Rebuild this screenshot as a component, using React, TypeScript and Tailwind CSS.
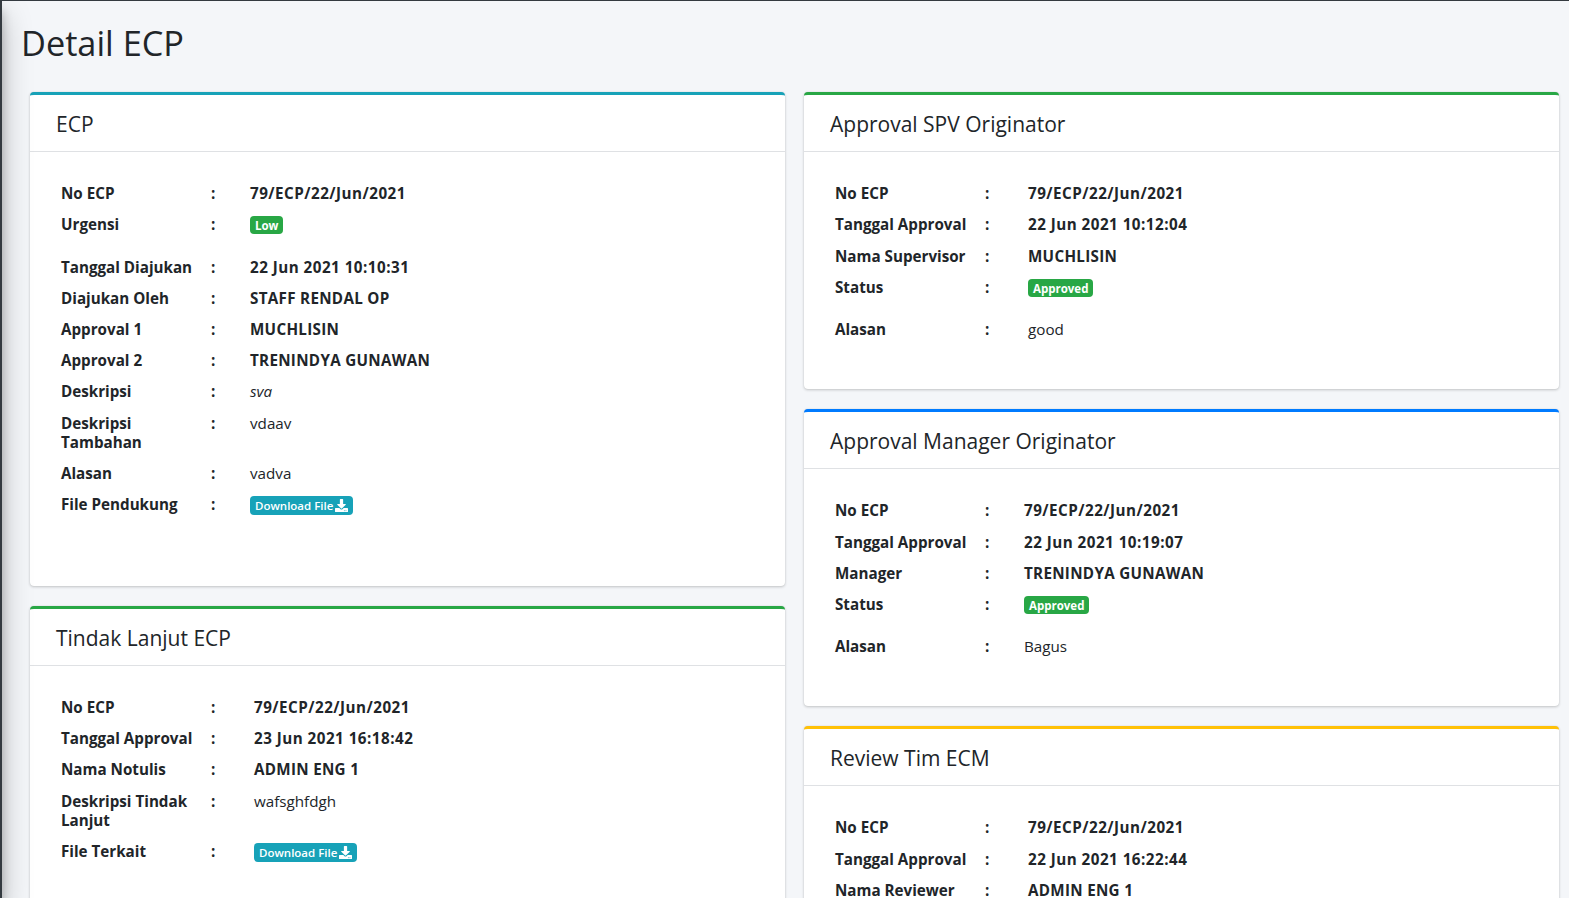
import { FaDownload } from "react-icons/fa";

type RowData = {
  label: string;
  value: React.ReactNode;
  tall?: boolean;
};

const Badge = ({ text }: { text: string }) => (
  <span className="inline-block align-top mt-[1px] px-[5px] h-[18px] leading-[19px] rounded-[4px] bg-[#28a745] text-white text-[11.5px] font-bold">
    {text}
  </span>
);

const DownloadBadge = () => (
  <span className="inline-flex items-center gap-[2px] align-top mt-[1px] px-[5px] h-[19px] rounded-[4px] bg-[#17a2b8] text-white text-[11.5px] font-semibold">
    Download File
    <FaDownload className="w-[13px] h-[13px]" />
  </span>
);

const Strong = ({ children }: { children: React.ReactNode }) => (
  <span className="font-bold tracking-[0.3px]">{children}</span>
);

// digits are wider in the original font
const StrongNum = ({ children }: { children: React.ReactNode }) => (
  <span className="font-bold tracking-[0.48px]">{children}</span>
);

const Card = ({
  title,
  border,
  rows,
  valueCol,
  pb,
}: {
  title: string;
  border: string;
  rows: RowData[];
  valueCol: string;
  pb: string;
}) => (
  <div className={`bg-white rounded-[4px] border-t-[3px] shadow-[0_0_1px_rgba(0,0,0,0.125),0_1px_3px_rgba(0,0,0,0.2)] ${border}`}>
    <div className="h-[57px] pt-[3px] px-[26px] flex items-center border-b border-[#dfe1e4] text-[21px] text-[#212529]">
      {title}
    </div>
    <div className={`pt-[26.15px] pl-[26px] text-[15.2px] leading-[19.2px] text-[#212529] ${pb}`}>
      {rows.map((r) => (
        <div key={r.label} className={`flex pl-[5px] pt-[6px] ${r.tall ? "pb-[17px]" : "pb-[6px]"}`}>
          <div className="w-[150px] shrink-0 font-bold">{r.label}</div>
          <div className={`shrink-0 font-bold ${valueCol}`}>:</div>
          <div>{r.value}</div>
        </div>
      ))}
    </div>
  </div>
);

export default function App() {
  return (
    <div
      className="relative h-screen overflow-hidden bg-[#f4f6f9] border-t border-[#343a40]"
      style={{ fontFamily: '"Open Sans", "Noto Sans", sans-serif' }}
    >
      <div className="absolute left-[-248px] top-0 bottom-0 z-10 w-[250px] bg-[#343a40] shadow-[0_14px_28px_rgba(0,0,0,0.25),0_10px_10px_rgba(0,0,0,0.22)]" />
      <h1 className="pl-[21px] h-[91px] pt-[20px] text-[34.3px] leading-[44px] text-[#212529]">Detail ECP</h1>
      <div className="grid grid-cols-2 gap-[19px] pl-[30px] pr-[10px]">
        <div className="flex flex-col gap-[20px]">
          <Card
            title="ECP"
            border="border-[#17a2b8]"
            valueCol="w-[39px]"
            pb="pb-[64.6px]"
            rows={[
              { label: "No ECP", value: <StrongNum>79/ECP/22/Jun/2021</StrongNum> },
              { label: "Urgensi", value: <Badge text="Low" />, tall: true },
              { label: "Tanggal Diajukan", value: <StrongNum>22 Jun 2021 10:10:31</StrongNum> },
              { label: "Diajukan Oleh", value: <Strong>STAFF RENDAL OP</Strong> },
              { label: "Approval 1", value: <Strong>MUCHLISIN</Strong> },
              { label: "Approval 2", value: <Strong>TRENINDYA GUNAWAN</Strong> },
              { label: "Deskripsi", value: <em>sva</em> },
              { label: "Deskripsi Tambahan", value: "vdaav" },
              { label: "Alasan", value: "vadva" },
              { label: "File Pendukung", value: <DownloadBadge /> },
            ]}
          />
          <Card
            title="Tindak Lanjut ECP"
            border="border-[#28a745]"
            valueCol="w-[43px]"
            pb="pb-[65px]"
            rows={[
              { label: "No ECP", value: <StrongNum>79/ECP/22/Jun/2021</StrongNum> },
              { label: "Tanggal Approval", value: <StrongNum>23 Jun 2021 16:18:42</StrongNum> },
              { label: "Nama Notulis", value: <Strong>ADMIN ENG 1</Strong> },
              { label: "Deskripsi Tindak Lanjut", value: "wafsghfdgh" },
              { label: "File Terkait", value: <DownloadBadge /> },
            ]}
          />
        </div>
        <div className="flex flex-col gap-[20px]">
          <Card
            title="Approval SPV Originator"
            border="border-[#28a745]"
            valueCol="w-[43px]"
            pb="pb-[44px]"
            rows={[
              { label: "No ECP", value: <StrongNum>79/ECP/22/Jun/2021</StrongNum> },
              { label: "Tanggal Approval", value: <StrongNum>22 Jun 2021 10:12:04</StrongNum> },
              { label: "Nama Supervisor", value: <Strong>MUCHLISIN</Strong> },
              { label: "Status", value: <Badge text="Approved" />, tall: true },
              { label: "Alasan", value: "good" },
            ]}
          />
          <Card
            title="Approval Manager Originator"
            border="border-[#007bff]"
            valueCol="w-[39px]"
            pb="pb-[44px]"
            rows={[
              { label: "No ECP", value: <StrongNum>79/ECP/22/Jun/2021</StrongNum> },
              { label: "Tanggal Approval", value: <StrongNum>22 Jun 2021 10:19:07</StrongNum> },
              { label: "Manager", value: <Strong>TRENINDYA GUNAWAN</Strong> },
              { label: "Status", value: <Badge text="Approved" />, tall: true },
              { label: "Alasan", value: "Bagus" },
            ]}
          />
          <Card
            title="Review Tim ECM"
            border="border-[#ffc107]"
            valueCol="w-[43px]"
            pb="pb-[44px]"
            rows={[
              { label: "No ECP", value: <StrongNum>79/ECP/22/Jun/2021</StrongNum> },
              { label: "Tanggal Approval", value: <StrongNum>22 Jun 2021 16:22:44</StrongNum> },
              { label: "Nama Reviewer", value: <Strong>ADMIN ENG 1</Strong> },
            ]}
          />
        </div>
      </div>
    </div>
  );
}
